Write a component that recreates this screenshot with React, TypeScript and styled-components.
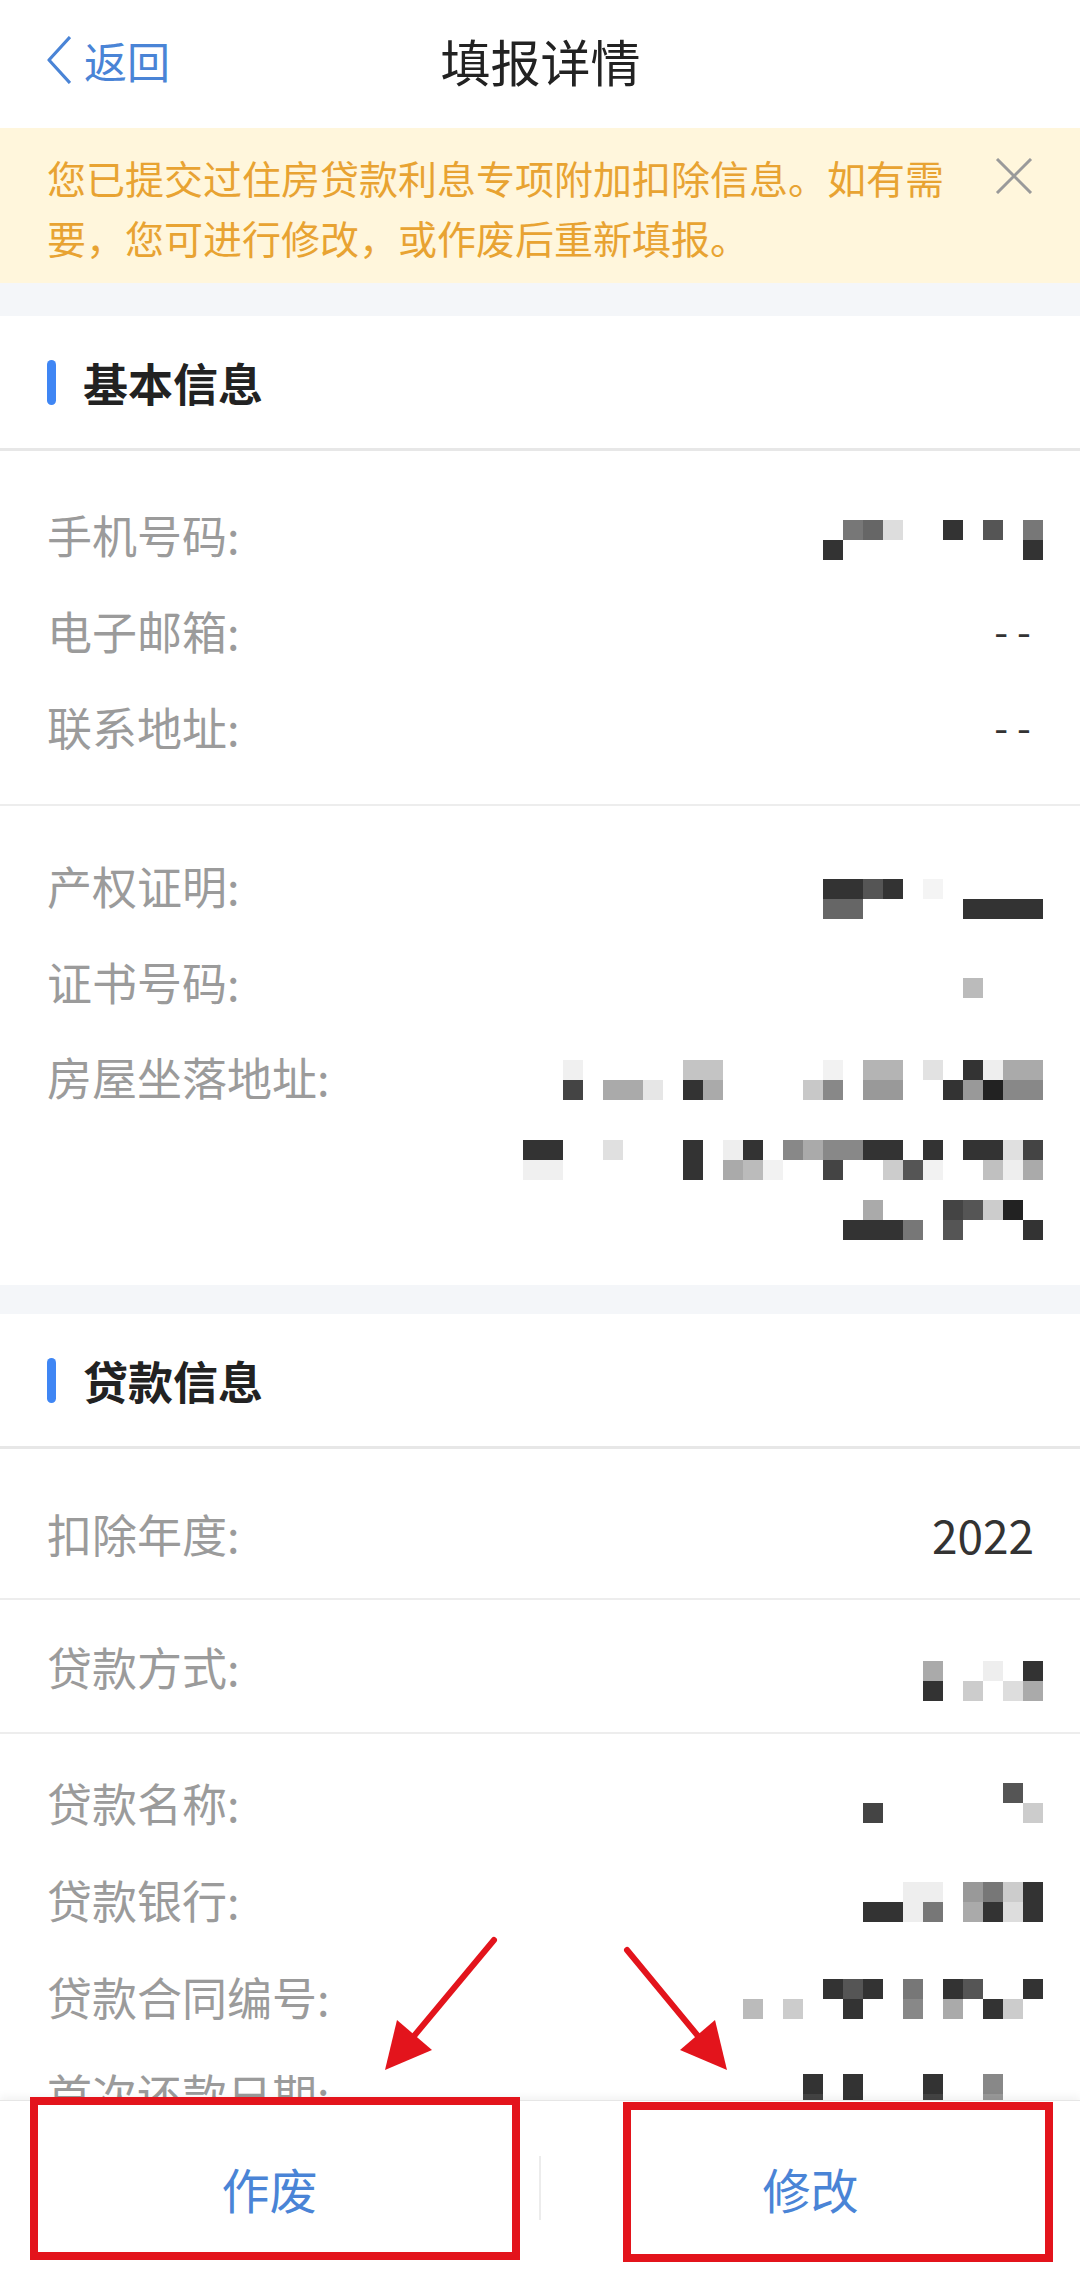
import React from 'react';
import styled, { createGlobalStyle } from 'styled-components';

const GlobalStyle = createGlobalStyle`
  html, body { margin: 0; padding: 0; overflow: hidden; }
  body {
    font-family: "Noto Sans CJK SC", "Noto Sans", sans-serif;
    background: #f4f6f9;
  }
  * { box-sizing: border-box; }
`;

const Page = styled.div`
  position: relative;
  width: 1080px;
  height: 2275px;
  overflow: hidden;
  background: #f4f6f9;
`;

const NavBar = styled.header`
  display: grid;
  grid-template-columns: 1fr auto 1fr;
  align-items: center;
  height: 128px;
  padding: 0 46px 8px 47px;
  background: #fff;
`;

const BackLink = styled.div`
  display: flex;
  align-items: center;
  gap: 13px;
  justify-self: start;
  color: #4a84d6;
  font-size: 43px;
  line-height: 1;
`;

const Title = styled.h1`
  margin: 0;
  font-size: 50px;
  font-weight: 400;
  color: #222;
  line-height: 1;
`;

const Notice = styled.div`
  display: flex;
  align-items: flex-start;
  justify-content: space-between;
  padding: 19px 47px 16px 47px;
  background: #fff6dc;
`;

const NoticeText = styled.p`
  margin: 0;
  width: 910px;
  font-size: 39px;
  line-height: 60px;
  color: #e8a332;
`;

const CloseIcon = styled.svg`
  margin-top: 11px;
  flex: none;
`;

const Section = styled.section<{ $gap: number }>`
  margin-top: ${(p) => p.$gap}px;
  background: #fff;
`;

const SectionHeader = styled.div`
  display: flex;
  align-items: center;
  gap: 27px;
  height: 135px;
  padding-left: 47px;
  border-bottom: 3px solid #e7e7e7;
`;

const HeaderBar = styled.span`
  width: 9px;
  height: 45px;
  border-radius: 5px;
  background: #3f86f4;
`;

const SectionTitle = styled.h2`
  margin: 0;
  font-size: 45px;
  font-weight: 700;
  color: #222;
  line-height: 1;
`;

const Group = styled.div<{ $pt: number; $pb: number; $line?: boolean }>`
  padding-top: ${(p) => p.$pt}px;
  padding-bottom: ${(p) => p.$pb}px;
  border-bottom: ${(p) => (p.$line ? '2px solid #ededed' : 'none')};
`;

const Row = styled.div<{ $h: number; $top?: boolean }>`
  display: flex;
  justify-content: space-between;
  align-items: ${(p) => (p.$top ? 'flex-start' : 'center')};
  height: ${(p) => p.$h}px;
  padding: 0 46px 0 47px;
  line-height: ${(p) => (p.$top ? '96px' : '1')};
`;

const Label = styled.span`
  font-size: 45px;
  color: #9b9b9b;
`;

const Value = styled.span`
  font-size: 46px;
  color: #333;
`;

const Dash = styled.span`
  font-size: 40px;
  color: #333;
  letter-spacing: 9px;
  margin-right: -6px;
`;

const MosaicSvg = styled.svg<{ $dy: number }>`
  display: block;
  flex: none;
  margin-right: -9px;
  margin-top: ${(p) => p.$dy}px;
`;

const BottomBar = styled.footer`
  position: absolute;
  left: 0;
  right: 0;
  bottom: 0;
  height: 175px;
  display: flex;
  align-items: center;
  background: #fff;
  border-top: 1px solid #e6e6e6;
  box-shadow: 0 -4px 8px rgba(0, 0, 0, 0.05);
`;

const ActionButton = styled.button`
  flex: 1;
  height: 100%;
  border: none;
  background: transparent;
  font-family: inherit;
  font-size: 48px;
  color: #4a84d6;
  padding: 0;
`;

const BarDivider = styled.span`
  width: 2px;
  height: 64px;
  background: #ececec;
`;

const RedBox = styled.div<{ $left: number; $top: number; $w: number; $h: number }>`
  position: absolute;
  left: ${(p) => p.$left}px;
  top: ${(p) => p.$top}px;
  width: ${(p) => p.$w}px;
  height: ${(p) => p.$h}px;
  border: 8px solid #e3141c;
  pointer-events: none;
`;

const ArrowLayer = styled.svg`
  position: absolute;
  left: 0;
  top: 1920px;
  pointer-events: none;
  z-index: 2;
`;

type Cell = [number, number, string];

const Mosaic: React.FC<{ x0: number; rows: number; cells: Cell[]; dy?: number }> = ({
  x0,
  rows,
  cells,
  dy = 0,
}) => {
  const w = 1043 - x0;
  const h = rows * 20;
  return (
    <MosaicSvg $dy={dy} width={w} height={h} viewBox={`0 0 ${w} ${h}`}>
      {cells.map(([x, r, c], i) => (
        <rect key={i} x={x - x0} y={r * 20} width={20} height={20} fill={c} />
      ))}
    </MosaicSvg>
  );
};

const phone: Cell[] = [
  [843, 0, '#777'], [863, 0, '#666'], [883, 0, '#ddd'], [943, 0, '#333'], [983, 0, '#555'], [1023, 0, '#777'],
  [823, 1, '#333'], [1023, 1, '#333'],
];

const deed: Cell[] = [
  [823, 0, '#333'], [843, 0, '#333'], [863, 0, '#555'], [883, 0, '#333'], [923, 0, '#f4f4f4'],
  [823, 1, '#666'], [843, 1, '#666'], [963, 1, '#333'], [983, 1, '#333'], [1003, 1, '#333'], [1023, 1, '#333'],
];

const certNo: Cell[] = [[963, 0, '#bbb']];

const address: Cell[] = [
  [563, 0, '#f0f0f0'], [683, 0, '#c4c4c4'], [703, 0, '#c4c4c4'], [823, 0, '#f2f2f2'], [863, 0, '#b4b4b4'],
  [883, 0, '#b4b4b4'], [923, 0, '#e2e2e2'], [963, 0, '#333'], [983, 0, '#eee'], [1003, 0, '#aaa'], [1023, 0, '#aaa'],
  [563, 1, '#444'], [603, 1, '#aaa'], [623, 1, '#aaa'], [643, 1, '#e6e6e6'], [683, 1, '#333'], [703, 1, '#aaa'],
  [803, 1, '#c8c8c8'], [823, 1, '#888'], [863, 1, '#999'], [883, 1, '#999'], [943, 1, '#333'], [963, 1, '#999'],
  [983, 1, '#222'], [1003, 1, '#888'], [1023, 1, '#888'],
  [523, 4, '#333'], [543, 4, '#333'], [603, 4, '#e0e0e0'], [683, 4, '#333'], [723, 4, '#eee'], [743, 4, '#333'],
  [783, 4, '#888'], [803, 4, '#aaa'], [823, 4, '#888'], [843, 4, '#888'], [863, 4, '#333'], [883, 4, '#333'],
  [923, 4, '#333'], [963, 4, '#333'], [983, 4, '#333'], [1003, 4, '#e0e0e0'], [1023, 4, '#444'],
  [523, 5, '#f0f0f0'], [543, 5, '#f0f0f0'], [683, 5, '#333'], [723, 5, '#aaa'], [743, 5, '#bbb'], [763, 5, '#f2f2f2'],
  [823, 5, '#444'], [883, 5, '#ccc'], [903, 5, '#555'], [923, 5, '#f2f2f2'], [983, 5, '#c0c0c0'], [1003, 5, '#eee'],
  [1023, 5, '#aaa'],
  [863, 7, '#aaa'], [943, 7, '#444'], [963, 7, '#555'], [983, 7, '#ccc'], [1003, 7, '#222'],
  [843, 8, '#333'], [863, 8, '#333'], [883, 8, '#333'], [903, 8, '#777'], [943, 8, '#555'], [1023, 8, '#333'],
];

const loanType: Cell[] = [
  [923, 0, '#aaa'], [983, 0, '#eee'], [1023, 0, '#333'],
  [923, 1, '#333'], [963, 1, '#ccc'], [1003, 1, '#ddd'], [1023, 1, '#aaa'],
];

const loanName: Cell[] = [
  [1003, 0, '#555'],
  [863, 1, '#444'], [1023, 1, '#ccc'],
];

const loanBank: Cell[] = [
  [903, 0, '#eee'], [923, 0, '#eee'], [963, 0, '#999'], [983, 0, '#777'], [1003, 0, '#ccc'], [1023, 0, '#333'],
  [863, 1, '#333'], [883, 1, '#333'], [903, 1, '#eee'], [923, 1, '#777'], [963, 1, '#aaa'], [983, 1, '#333'],
  [1003, 1, '#ddd'], [1023, 1, '#333'],
];

const contract: Cell[] = [
  [823, 0, '#333'], [843, 0, '#555'], [863, 0, '#333'], [903, 0, '#777'], [943, 0, '#333'], [963, 0, '#555'],
  [1023, 0, '#333'],
  [743, 1, '#bbb'], [783, 1, '#ccc'], [843, 1, '#333'], [903, 1, '#888'], [943, 1, '#aaa'], [983, 1, '#333'],
  [1003, 1, '#ccc'],
];

const firstPay: Cell[] = [
  [803, 0, '#333'], [843, 0, '#333'], [923, 0, '#333'], [983, 0, '#888'],
  [803, 1, '#444'], [843, 1, '#333'], [923, 1, '#444'], [983, 1, '#999'],
];

export default function App() {
  return (
    <Page>
      <GlobalStyle />
      <NavBar>
        <BackLink>
          <svg width="24" height="48" viewBox="0 0 24 48">
            <path d="M23 1 L2 24 L23 47" fill="none" stroke="#4a84d6" strokeWidth="3.2" strokeLinejoin="round" />
          </svg>
          返回
        </BackLink>
        <Title>填报详情</Title>
        <span />
      </NavBar>

      <Notice>
        <NoticeText>您已提交过住房贷款利息专项附加扣除信息。如有需要，您可进行修改，或作废后重新填报。</NoticeText>
        <CloseIcon width="38" height="36" viewBox="0 0 38 36">
          <path d="M2 1 L36 35 M36 1 L2 35" stroke="#9a9a9a" strokeWidth="3" fill="none" />
        </CloseIcon>
      </Notice>

      <Section $gap={33}>
        <SectionHeader>
          <HeaderBar />
          <SectionTitle>基本信息</SectionTitle>
        </SectionHeader>
        <Group $pt={35} $pb={30} $line>
          <Row $h={96}>
            <Label>手机号码:</Label>
            <Mosaic x0={823} rows={2} cells={phone} dy={12} />
          </Row>
          <Row $h={96}>
            <Label>电子邮箱:</Label>
            <Dash>--</Dash>
          </Row>
          <Row $h={96}>
            <Label>联系地址:</Label>
            <Dash>--</Dash>
          </Row>
        </Group>
        <Group $pt={31} $pb={44}>
          <Row $h={96}>
            <Label>产权证明:</Label>
            <Mosaic x0={823} rows={2} cells={deed} dy={28} />
          </Row>
          <Row $h={96}>
            <Label>证书号码:</Label>
            <Mosaic x0={963} rows={1} cells={certNo} dy={14} />
          </Row>
          <Row $h={212} $top>
            <Label>房屋坐落地址:</Label>
            <Mosaic x0={523} rows={9} cells={address} dy={31} />
          </Row>
        </Group>
      </Section>

      <Section $gap={29}>
        <SectionHeader>
          <HeaderBar />
          <SectionTitle>贷款信息</SectionTitle>
        </SectionHeader>
        <Group $pt={20} $pb={0} $line>
          <Row $h={129}>
            <Label>扣除年度:</Label>
            <Value>2022</Value>
          </Row>
        </Group>
        <Group $pt={0} $pb={0} $line>
          <Row $h={132}>
            <Label>贷款方式:</Label>
            <Mosaic x0={923} rows={2} cells={loanType} dy={30} />
          </Row>
        </Group>
        <Group $pt={20} $pb={0}>
          <Row $h={97}>
            <Label>贷款名称:</Label>
            <Mosaic x0={863} rows={2} cells={loanName} />
          </Row>
          <Row $h={97}>
            <Label>贷款银行:</Label>
            <Mosaic x0={863} rows={2} cells={loanBank} dy={4} />
          </Row>
          <Row $h={97}>
            <Label>贷款合同编号:</Label>
            <Mosaic x0={743} rows={2} cells={contract} dy={4} />
          </Row>
          <Row $h={97}>
            <Label>首次还款日期:</Label>
            <Mosaic x0={803} rows={2} cells={firstPay} dy={0} />
          </Row>
        </Group>
      </Section>

      <ArrowLayer width="1080" height="160" viewBox="0 1920 1080 160">
        <line x1="494" y1="1940" x2="414" y2="2036" stroke="#e3141c" strokeWidth="6" strokeLinecap="round" />
        <polygon points="385,2070 397,2020 432,2050" fill="#e3141c" />
        <line x1="627" y1="1950" x2="698" y2="2036" stroke="#e3141c" strokeWidth="6" strokeLinecap="round" />
        <polygon points="727,2070 715,2020 680,2050" fill="#e3141c" />
      </ArrowLayer>

      <BottomBar>
        <ActionButton>作废</ActionButton>
        <BarDivider />
        <ActionButton>修改</ActionButton>
        <RedBox $left={30} $top={-4} $w={490} $h={163} />
        <RedBox $left={623} $top={1} $w={430} $h={160} />
      </BottomBar>
    </Page>
  );
}
